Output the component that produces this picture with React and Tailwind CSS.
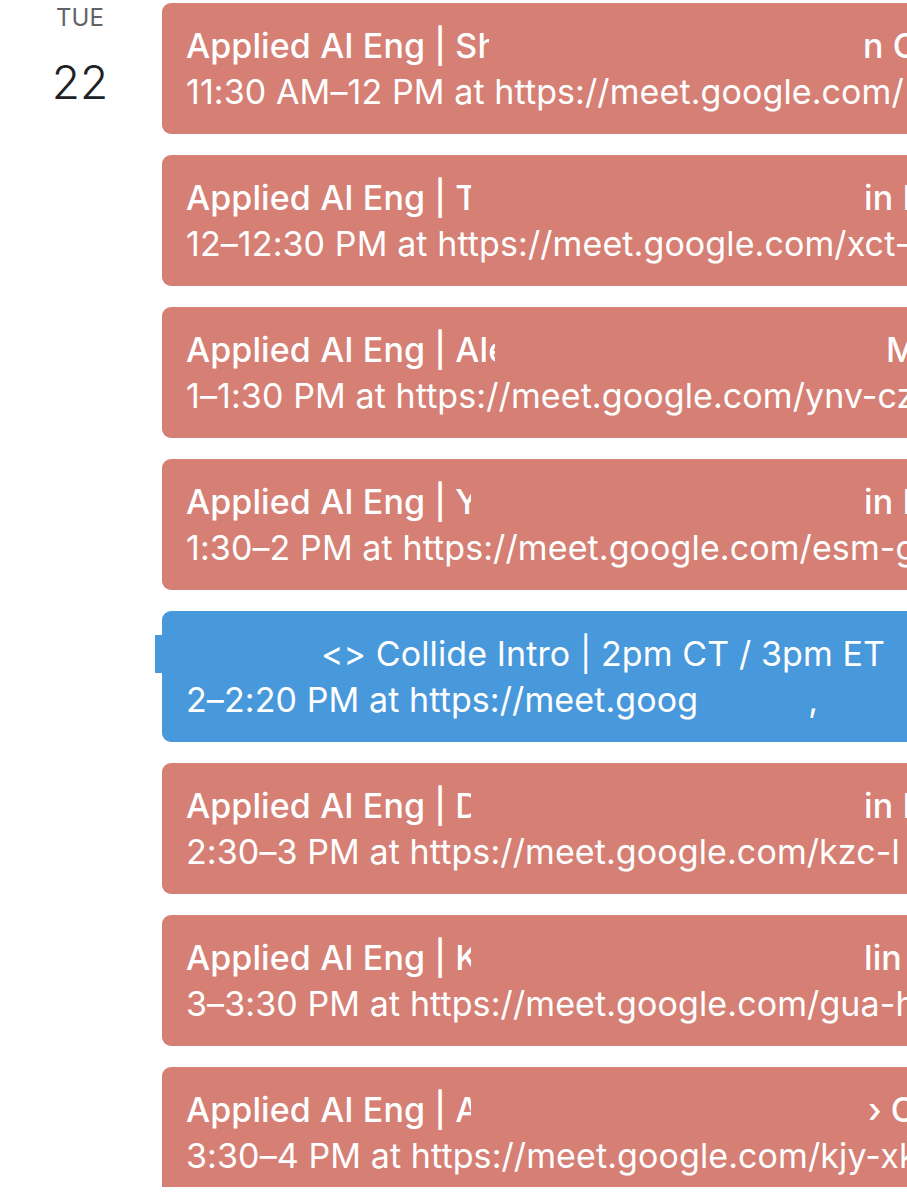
const events = [
  { left: "Applied AI Eng | Sh", clip: 303, right: "n C", rightAt: 863, time: "11:30 AM–12 PM at https://meet.google.com/" },
  { left: "Applied AI Eng | T", clip: 285, right: "in I", rightAt: 864, time: "12–12:30 PM at https://meet.google.com/xct-" },
  { left: "Applied AI Eng | Ale", clip: 309, right: "M", rightAt: 886, time: "1–1:30 PM at https://meet.google.com/ynv-cz" },
  { left: "Applied AI Eng | Y", clip: 285, right: "in M", rightAt: 864, time: "1:30–2 PM at https://meet.google.com/esm-g" },
  { blue: true },
  { left: "Applied AI Eng | D", clip: 285, right: "in I", rightAt: 864, time: "2:30–3 PM at  https://meet.google.com/kzc-l" },
  { left: "Applied AI Eng | K", clip: 285, right: "lin", rightAt: 864, time: "3–3:30 PM at https://meet.google.com/gua-h" },
  { left: "Applied AI Eng | A", clip: 285, right: "› C", rightAt: 868, time: "3:30–4 PM at https://meet.google.com/kjy-xk" },
];

function EventCard({ ev }) {
  if (ev.blue) {
    return (
      <div className="relative shrink-0">
        <div className="absolute left-[-7px] top-[24px] h-[38px] w-[8px] bg-[#4898dc]" />
        <div className="h-[131px] w-[800px] rounded-[9px] bg-[#4898dc] pl-[24px] pt-[19px] text-white">
          <div className="flex h-[46px] items-center whitespace-nowrap text-[34px] tracking-[0.1px]">
            <span className="ml-[135px]">{"<> Collide Intro | 2pm CT / 3pm ET"}</span>
          </div>
          <div className="flex h-[46px] items-center whitespace-nowrap text-[34px] tracking-[0.1px]">
            <span>2–2:20 PM at https://meet.goog</span>
            <span className="ml-[110px]">,</span>
          </div>
        </div>
      </div>
    );
  }
  return (
    <div className="h-[131px] w-[800px] shrink-0 rounded-[9px] bg-[#d57f75] pl-[24px] pt-[19px] text-white">
      <div className="flex h-[46px] items-center whitespace-nowrap text-[34px] font-medium tracking-[0.1px]">
        <span className="inline-block overflow-hidden" style={{ width: ev.clip }}>{ev.left}</span>
        <span style={{ marginLeft: ev.rightAt - 186 - ev.clip }}>{ev.right}</span>
      </div>
      <div className="flex h-[46px] items-center whitespace-nowrap text-[34px] tracking-[0.1px]">{ev.time}</div>
    </div>
  );
}

export default function App() {
  return (
    <div className="h-[1200px] w-[907px] overflow-hidden bg-white font-['Inter',sans-serif]">
      <div className="flex h-[1187px] overflow-hidden">
        <div className="flex w-[162px] shrink-0 flex-col items-center pr-[2px]">
          <div className="mt-[4px] text-[24px] leading-[28px] text-[#5f6368]">TUE</div>
          <div className="mt-[22px] text-[46px] leading-[56px] font-light text-[#202124]">22</div>
        </div>
        <div className="flex flex-col gap-[21px] pt-[3px]">
          {events.map((ev, i) => (
            <EventCard key={i} ev={ev} />
          ))}
        </div>
      </div>
    </div>
  );
}
